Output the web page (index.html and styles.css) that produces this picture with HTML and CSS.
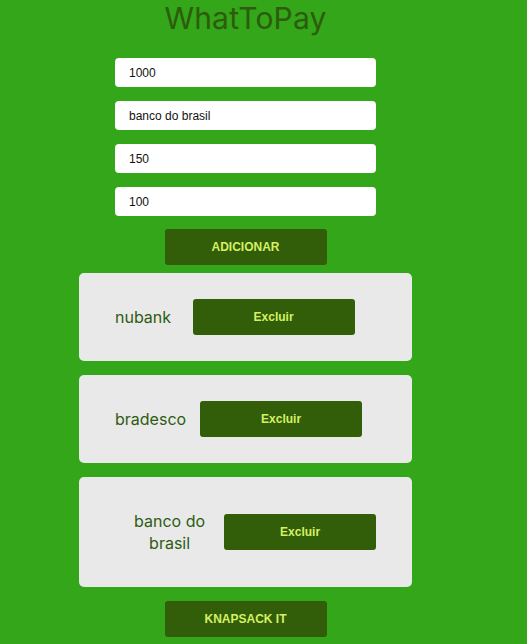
FILE: index.html
```html
<!DOCTYPE html>
<html lang="pt">
<head>
<meta charset="utf-8">
<title>WhatToPay</title>
<link rel="stylesheet" href="styles.css">
</head>
<body>
<main class="app">
  <h1 class="title">WhatToPay</h1>
  <form class="form">
    <input class="field" type="text" value="1000">
    <input class="field" type="text" value="banco do brasil">
    <input class="field" type="text" value="150">
    <input class="field" type="text" value="100">
    <button class="btn btn-add" type="button">ADICIONAR</button>
  </form>
  <ul class="list">
    <li class="card"><p class="card-name">nubank</p><button class="btn card-btn" type="button">Excluir</button></li>
    <li class="card"><p class="card-name">bradesco</p><button class="btn card-btn" type="button">Excluir</button></li>
    <li class="card"><p class="card-name">banco do brasil</p><button class="btn card-btn" type="button">Excluir</button></li>
  </ul>
  <button class="btn btn-run" type="button">KNAPSACK IT</button>
</main>
</body>
</html>
```
FILE: styles.css
```css
html, body {
  margin: 0;
  padding: 0;
  background: #33a619;
}
body {
  font-family: "Liberation Sans", Arial, sans-serif;
}
.app {
  width: 491px;
  display: flex;
  flex-direction: column;
  align-items: center;
}
.title {
  margin: 0 0 22px;
  font-family: Inter, "Noto Sans", sans-serif;
  font-weight: 400;
  font-size: 30px;
  letter-spacing: 0.2px;
  line-height: 36px;
  color: #2c5c0c;
}
.form {
  display: flex;
  flex-direction: column;
  align-items: center;
  gap: 14px;
}
.field {
  box-sizing: border-box;
  width: 261px;
  height: 29px;
  border: none;
  border-radius: 4px;
  padding: 0 14px;
  background: #fff;
  font-family: "Liberation Sans", Arial, sans-serif;
  font-size: 12px;
  color: #111;
  outline: none;
}
.btn {
  box-sizing: border-box;
  width: 162px;
  height: 36px;
  border: none;
  border-radius: 3px;
  background: #325d09;
  color: #d6f063;
  font-family: "Liberation Sans", Arial, sans-serif;
  font-weight: 700;
  font-size: 12px;
  padding: 0;
  cursor: pointer;
}
.btn-add {
  margin-top: -1px;
}
.list {
  list-style: none;
  margin: 8px 0 0;
  padding: 0;
  display: flex;
  flex-direction: column;
  gap: 14px;
}
.card {
  box-sizing: border-box;
  width: 333px;
  padding: 17px 36px;
  background: #e9e9e9;
  border-radius: 5px;
  display: flex;
  align-items: center;
}
.card-name {
  margin: 16px 0;
  font-family: Inter, "Noto Sans", sans-serif;
  font-size: 16px;
  line-height: 22px;
  text-align: center;
  color: #2d5c12;
}
.card-btn {
  margin: 0 auto;
  flex-shrink: 1;
}
.btn-run {
  margin-top: 14px;
}
```
